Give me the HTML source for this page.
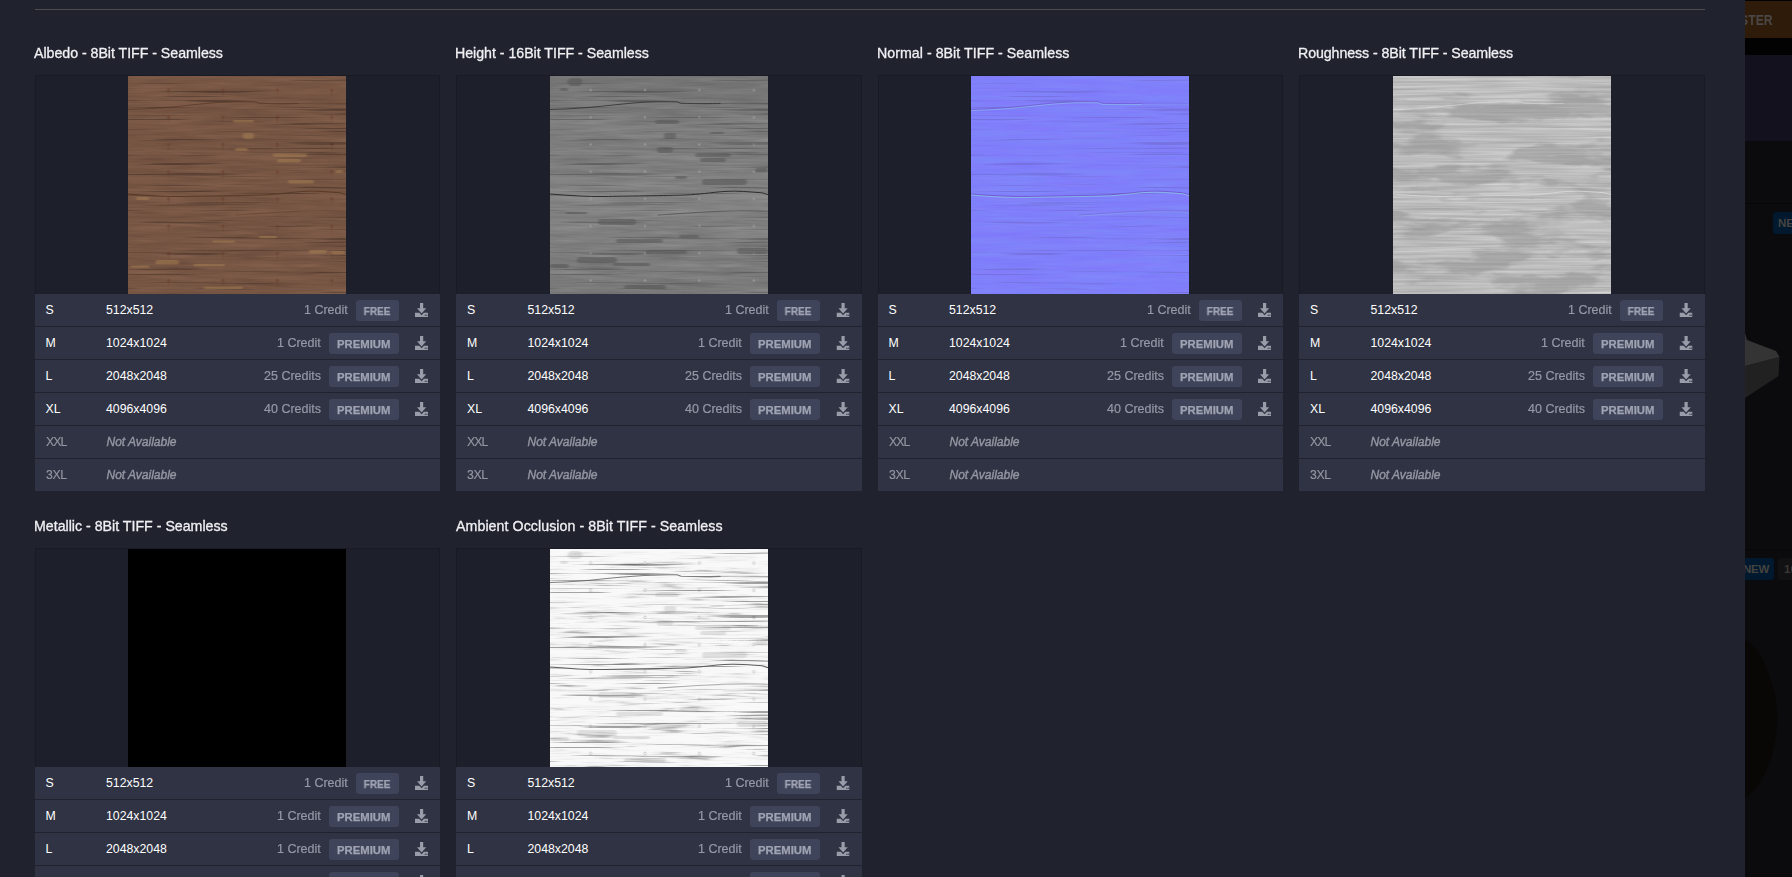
<!DOCTYPE html>
<html><head><meta charset="utf-8"><title>Textures</title>
<style>
*{box-sizing:border-box;margin:0;padding:0}
html,body{width:1792px;height:877px;overflow:hidden;background:#0b0b0d;font-family:"Liberation Sans",sans-serif;}
#bg{position:absolute;left:0;top:0;width:1792px;height:877px;background:#0b0b0d;overflow:hidden}
#bg .or{position:absolute;left:1700px;top:1px;width:92px;height:37px;background:#2e1b0a}
#bg .or span{position:absolute;right:19.4px;top:11px;height:16px;line-height:16px;font-weight:bold;font-size:14px;color:#4a4846;transform:scaleX(.87);transform-origin:100% 50%}
#bg .blk{position:absolute;left:1700px;top:0;width:92px;height:1px;background:#020202}
#bg .blk2{position:absolute;left:1700px;top:38px;width:92px;height:17px;background:#020202}
#bg .pur{position:absolute;left:1700px;top:55px;width:92px;height:86px;background:#12111d}
#bg .ln{position:absolute;left:1700px;width:92px;height:1px;background:#070709}
#bg .nb{position:absolute;height:22px;background:#00192f;border-radius:3px;color:#45433f;font-weight:bold;font-size:11.5px;line-height:22px}
#modal{position:absolute;left:0;top:0;width:1745px;height:877px;background:#20222e;overflow:hidden}
#hr{position:absolute;left:35px;top:9px;width:1670px;height:1px;background:#4d4d4d}
.col{position:absolute}
.title{position:absolute;left:-1px;top:43px;height:20px;line-height:20px;font-size:14.2px;font-weight:normal;color:#f0f0f3;-webkit-text-stroke:0.3px #f0f0f3;white-space:nowrap;will-change:transform}
.card{position:absolute;left:0;top:75px;width:100%}
.iw{height:219px;background:#1d202a;border:1px solid #191b24;border-bottom:0;position:relative}
.tex{position:absolute;top:0;display:block}
.row{position:relative;display:flex;align-items:center;height:32px;margin-bottom:1px;background:#303343;color:#fff;font-size:12.3px;line-height:32px;white-space:nowrap}
.sz{width:60px;padding-left:11px;flex:none}
.dim{flex:1;padding-left:11.5px}
.cr{color:#9699a7;margin-right:8px;font-size:12.5px;will-change:transform;-webkit-text-stroke:0.2px #9699a7}
.bd{height:21px;line-height:22px;border-radius:3px;background:#3f445a;color:#a0a3b2;font-size:11.3px;text-align:center;margin-right:16px;flex:none;position:relative;top:0.5px}
.bd.free{width:43px}
.bd.prem{width:70px}
.bd b{display:inline-block;will-change:transform;-webkit-text-stroke:0.25px #a0a3b2;position:relative;left:-0.5px}
.bd.free b{transform:scaleX(.89)}
.dl{flex:none;margin-right:12px;fill:#999ca9;position:relative;top:0px}
.ev .row{padding-right:.6px}
.ev .dl{transform:translateX(.5px)}
.na{color:#9496a2}
.na .sz{letter-spacing:-0.9px;will-change:transform;-webkit-text-stroke:0.15px #9496a2}
.na .dim{will-change:transform}
.na i{color:#9496a2;font-size:12px;-webkit-text-stroke:0.4px #9496a2}
</style></head><body>
<svg width="0" height="0" style="position:absolute">
<defs>
<filter id="f-alb" x="0" y="0" width="100%" height="100%" color-interpolation-filters="sRGB">
<feTurbulence type="fractalNoise" baseFrequency="0.012 0.16" numOctaves="3" seed="7" result="a"/>
<feTurbulence type="fractalNoise" baseFrequency="0.03 0.55" numOctaves="2" seed="3" result="b"/>
<feComposite in="a" in2="b" operator="arithmetic" k1="0" k2="0.6" k3="0.4" k4="0"/>
<feColorMatrix type="matrix" values="0.18 0 0 0 0.378  0.15 0 0 0 0.262  0.12 0 0 0 0.206  0 0 0 0 1"/>
</filter>
<filter id="f-hgt" x="0" y="0" width="100%" height="100%" color-interpolation-filters="sRGB">
<feTurbulence type="fractalNoise" baseFrequency="0.012 0.16" numOctaves="3" seed="7" result="a"/>
<feTurbulence type="fractalNoise" baseFrequency="0.03 0.55" numOctaves="2" seed="3" result="b"/>
<feComposite in="a" in2="b" operator="arithmetic" k1="0" k2="0.6" k3="0.4" k4="0"/>
<feColorMatrix type="matrix" values="0.2 0 0 0 0.395  0.2 0 0 0 0.395  0.2 0 0 0 0.395  0 0 0 0 1"/>
</filter>
<filter id="f-nrm" x="0" y="0" width="100%" height="100%" color-interpolation-filters="sRGB">
<feTurbulence type="fractalNoise" baseFrequency="0.012 0.16" numOctaves="3" seed="7" result="a"/>
<feTurbulence type="fractalNoise" baseFrequency="0.03 0.55" numOctaves="2" seed="3" result="b"/>
<feComposite in="a" in2="b" operator="arithmetic" k1="0" k2="0.6" k3="0.4" k4="0"/>
<feColorMatrix type="matrix" values="0.06 0 0 0 0.472  0 0.12 0 0 0.442  0 0 0 0 0.98  0 0 0 0 1"/>
</filter>
<filter id="f-rgh" x="0" y="0" width="100%" height="100%" color-interpolation-filters="sRGB">
<feTurbulence type="fractalNoise" baseFrequency="0.012 0.4" numOctaves="2" seed="11" result="a"/>
<feColorMatrix type="matrix" values="0.22 0 0 0 0.63  0.22 0 0 0 0.63  0.22 0 0 0 0.63  0 0 0 0 1"/>
</filter>
<filter id="f-blt" x="0" y="0" width="100%" height="100%" color-interpolation-filters="sRGB">
<feTurbulence type="fractalNoise" baseFrequency="0.013 0.045" numOctaves="4" seed="5"/>
<feColorMatrix type="matrix" values="0 0 0 0 0.58  0 0 0 0 0.58  0 0 0 0 0.58  -7 0 0 0 3.6"/>
</filter>
<filter id="f-ao" x="0" y="0" width="100%" height="100%" color-interpolation-filters="sRGB">
<feTurbulence type="fractalNoise" baseFrequency="0.012 0.16" numOctaves="3" seed="7" result="a"/>
<feTurbulence type="fractalNoise" baseFrequency="0.03 0.55" numOctaves="2" seed="3" result="b"/>
<feComposite in="a" in2="b" operator="arithmetic" k1="0" k2="0.5" k3="0.5" k4="0"/>
<feColorMatrix type="matrix" values="1 0 0 0 0  1 0 0 0 0  1 0 0 0 0  0 0 0 0 1"/>
<feComponentTransfer><feFuncR type="table" tableValues="0.5 0.55 0.62 0.76 0.92 0.97 0.98 0.98 0.98 0.98 0.98"/><feFuncG type="table" tableValues="0.5 0.55 0.62 0.76 0.92 0.97 0.98 0.98 0.98 0.98 0.98"/><feFuncB type="table" tableValues="0.5 0.55 0.62 0.76 0.92 0.97 0.98 0.98 0.98 0.98 0.98"/></feComponentTransfer>
</filter>
<filter id="f-ln" x="0" y="0" width="100%" height="100%" color-interpolation-filters="sRGB">
<feTurbulence type="fractalNoise" baseFrequency="0.007 0.42" numOctaves="2" seed="21"/>
<feColorMatrix type="matrix" values="0 0 0 0 0  0 0 0 0 0  0 0 0 0 0  -9 0 0 0 3.35"/>
</filter>
<filter id="f-lw" x="0" y="0" width="100%" height="100%" color-interpolation-filters="sRGB">
<feTurbulence type="fractalNoise" baseFrequency="0.007 0.42" numOctaves="2" seed="21"/>
<feColorMatrix type="matrix" values="0 0 0 0 1  0 0 0 0 1  0 0 0 0 1  -9 0 0 0 3.35"/>
</filter>
<filter id="f-lp" x="0" y="0" width="100%" height="100%" color-interpolation-filters="sRGB">
<feTurbulence type="fractalNoise" baseFrequency="0.007 0.42" numOctaves="2" seed="21"/>
<feColorMatrix type="matrix" values="0 0 0 0 0.42  0 0 0 0 0.32  0 0 0 0 0.8  -9 0 0 0 3.35"/>
</filter>
<filter id="f-lc" x="0" y="0" width="100%" height="100%" color-interpolation-filters="sRGB">
<feTurbulence type="fractalNoise" baseFrequency="0.007 0.42" numOctaves="2" seed="21"/>
<feColorMatrix type="matrix" values="0 0 0 0 0.55  0 0 0 0 0.75  0 0 0 0 0.95  -9 0 0 0 3.2"/>
</filter>
<filter id="bl2" x="-5%" y="-5%" width="110%" height="110%"><feGaussianBlur stdDeviation="0.9 0.5"/></filter>
<filter id="bl" x="-5%" y="-5%" width="110%" height="110%"><feGaussianBlur stdDeviation="1.2 0.7"/></filter>
<pattern id="riv-a" x="0" y="0" width="54.4" height="27.2" patternUnits="userSpaceOnUse"><circle cx="40.6" cy="14" r="1.7" fill="#6e4030"/><rect x="40.1" y="15" width="1" height="5" fill="#5d3a28" opacity=".5"/></pattern>
<pattern id="riv-h" x="0" y="0" width="54.4" height="27.2" patternUnits="userSpaceOnUse"><circle cx="40.6" cy="14" r="1.2" fill="#a8a8a8"/></pattern>
<pattern id="riv-o" x="0" y="0" width="54.4" height="27.2" patternUnits="userSpaceOnUse"><circle cx="40.6" cy="14" r="1.3" fill="#fff" stroke="#aaa" stroke-width=".7"/></pattern>
<linearGradient id="vg" x1="0" y1="0" x2="0" y2="1"><stop offset="0" stop-color="#000" stop-opacity=".09"/><stop offset=".25" stop-color="#000" stop-opacity="0"/><stop offset=".55" stop-color="#fff" stop-opacity=".04"/><stop offset="1" stop-color="#000" stop-opacity=".04"/></linearGradient>
<g id="cracks" fill="none" stroke-linecap="round">
<path opacity=".75" d="M0 33.5 C25 33 45 31 70 28.3 S110 25.5 127 25.8 L131 27.3 C150 27.8 160 27.6 170 27.4"/><path opacity=".3" d="M170 27.4 C190 27 200 27.2 218 27.5"/>
<path opacity=".95" d="M0 118 C18 119.5 38 120.8 55 120.5 S120 119.5 135 119 S160 116.5 174 115.5 S200 116 212 116.8 L218 118.6"/>
<path opacity=".45" d="M108 139 C125 138 150 136 173 135.2 S205 135 218 135.2"/>
</g>
<g id="flecksA" filter="url(#bl2)"><rect x="115" y="57" width="11" height="6" rx="2"/><rect x="107" y="72" width="13" height="3" rx="1.5"/><rect x="145" y="77.5" width="34" height="3.5" rx="1.75"/><rect x="149" y="83" width="24" height="3.5" rx="1.75"/><rect x="160" y="104" width="26" height="3.5" rx="1.75"/><rect x="8" y="121" width="13" height="3" rx="1.5"/><rect x="131" y="160" width="18" height="2.2" rx="1.1"/><rect x="84" y="164.5" width="23" height="2.2" rx="1.1"/><rect x="181" y="174" width="18" height="3.5" rx="1.75"/><rect x="27.5" y="184" width="23.5" height="4.5" rx="2"/><rect x="65.5" y="188" width="31.5" height="2.2" rx="1.1"/><rect x="2.6" y="189.5" width="18.4" height="2.2" rx="1.1"/><rect x="202" y="175" width="15" height="3" rx="1.5"/><rect x="207" y="94" width="8" height="3" rx="1.5"/><rect x="105" y="44" width="21" height="2.5" rx="1.25"/><rect x="76" y="210.5" width="39" height="2.5" rx="1.25"/></g>
<g id="flecks" filter="url(#bl)">
<rect x="105" y="44" width="24" height="4" rx="2"/><rect x="114" y="57" width="12" height="6" rx="2"/><rect x="107" y="71" width="16" height="6" rx="3"/>
<rect x="145" y="77" width="36" height="4" rx="2"/><rect x="150" y="82" width="26" height="4" rx="2"/><rect x="152" y="103" width="45" height="6" rx="3"/>
<rect x="205" y="92" width="13" height="4" rx="2"/><rect x="48" y="143" width="38" height="6" rx="3"/><rect x="66" y="163" width="47" height="4" rx="2"/>
<rect x="129" y="159" width="20" height="3" rx="1.5"/><rect x="95" y="174" width="42" height="4" rx="2"/><rect x="27" y="181" width="40" height="6" rx="3"/>
<rect x="187" y="172" width="31" height="6" rx="3"/><rect x="63" y="187" width="37" height="3" rx="1.5"/><rect x="74" y="209" width="42" height="4" rx="2"/>
<rect x="0" y="188" width="19" height="4" rx="2"/><rect x="18" y="2" width="14" height="8" rx="4"/><rect x="16" y="136" width="21" height="2" rx="1"/>
<rect x="125" y="100" width="12" height="3" rx="1.5"/><rect x="10" y="12" width="8" height="3" rx="1.5"/><rect x="160" y="56" width="14" height="2" rx="1"/>
</g>
<g id="t-albedo"><rect width="218" height="218" fill="#7a553d" filter="url(#f-alb)"/><rect width="218" height="218" fill="url(#riv-a)" opacity=".6"/><rect width="218" height="218" filter="url(#f-ln)" opacity=".22"/><use href="#flecksA" fill="#ad8755" opacity=".45"/><use href="#cracks" stroke="#4f3220" stroke-width="1" opacity=".8"/></g>
<g id="t-height"><rect width="218" height="218" fill="#7a7a7a" filter="url(#f-hgt)"/><rect width="218" height="218" fill="url(#vg)"/><rect width="218" height="218" fill="url(#riv-h)" opacity=".6"/><rect width="218" height="218" filter="url(#f-ln)" opacity=".18"/><use href="#flecks" fill="#565656" opacity=".55"/><use href="#cracks" stroke="#2a2a2a" stroke-width="1"/></g>
<g id="t-normal"><rect width="218" height="218" fill="#8080fa" filter="url(#f-nrm)"/><rect y="1" width="218" height="218" filter="url(#f-lc)" opacity=".35"/><rect width="218" height="218" filter="url(#f-lp)" opacity=".5"/><use href="#cracks" stroke="#7050c8" stroke-width="1" opacity=".9"/><use href="#cracks" stroke="#90e0e0" stroke-width=".8" opacity=".8" transform="translate(0,0.9)"/></g>
<g id="t-rough"><rect width="218" height="218" fill="#b8b8b8" filter="url(#f-rgh)"/><rect width="218" height="218" filter="url(#f-blt)" opacity=".55"/><rect width="218" height="218" filter="url(#f-lw)" opacity=".12"/><use href="#cracks" stroke="#e6e6e6" stroke-width=".8" opacity=".8"/></g>
<g id="t-metal"><rect width="218" height="218" fill="#000"/></g>
<g id="t-ao"><rect width="218" height="218" fill="#eee" filter="url(#f-ao)"/><rect width="218" height="218" fill="url(#riv-o)" opacity=".8"/><rect width="218" height="218" filter="url(#f-ln)" opacity=".34"/><use href="#flecks" fill="#999" opacity=".25"/><use href="#cracks" stroke="#555" stroke-width="1.1"/></g>
</defs></svg>
<div id="bg">
<div class="blk"></div><div class="or"><span>REGISTER</span></div><div class="blk2"></div><div class="pur"></div>
<div class="ln" style="top:203px"></div><div class="ln" style="top:549px"></div>
<div class="nb" style="left:1773px;top:212px;width:40px;padding-left:5px">NEW</div>
<div class="nb" style="left:1730px;top:558px;width:44px;padding-left:13px;letter-spacing:-0.2px">NEW</div>
<div class="nb" style="left:1778px;top:558px;width:40px;padding-left:6px;background:#111113;color:#3a3836">16K</div>
<svg style="position:absolute;left:1745px;top:320px" width="47" height="100" viewBox="0 0 47 100"><path d="M0 46 L34.5 37 L33.5 56 L0 78z" fill="#212121"/><path d="M0 13 L2 20 L31 31 L34.5 37 L0 46z" fill="#343434"/></svg>
<svg style="position:absolute;left:1745px;top:636px" width="47" height="170" viewBox="0 0 47 170"><path d="M0 4 C10 8 18 20 26 45 S34 90 28 115 S10 155 0 162z" fill="#080706"/></svg>
</div>
<div id="modal">
<div id="hr"></div>
<div class="col" style="left:34.5px;width:405.5px;top:0px"><div class="title" style="left:-0.6px;letter-spacing:-0.030px">Albedo - 8Bit TIFF - Seamless</div><div class="card"><div class="iw"><svg class="tex" style="left:92.5px" width="218" height="218" viewBox="0 0 218 218"><use href="#t-albedo"/></svg></div><div class="row"><span class="sz">S</span><span class="dim">512x512</span><span class="cr">1 Credit</span><span class="bd free"><b>FREE</b></span><svg class="dl" viewBox="0 0 13 14" width="13" height="14"><path d="M5 0h3.2v5.2h3L6.6 10.6 2 5.2h3z"/><path d="M0 9.7h4.3l2.3 2.5 2.3-2.5H13V14H0z M9.7 11.7h1.2v1h-1.2z M11.3 11.7h1.2v1h-1.2z" fill-rule="evenodd"/></svg></div><div class="row"><span class="sz">M</span><span class="dim">1024x1024</span><span class="cr">1 Credit</span><span class="bd prem"><b>PREMIUM</b></span><svg class="dl" viewBox="0 0 13 14" width="13" height="14"><path d="M5 0h3.2v5.2h3L6.6 10.6 2 5.2h3z"/><path d="M0 9.7h4.3l2.3 2.5 2.3-2.5H13V14H0z M9.7 11.7h1.2v1h-1.2z M11.3 11.7h1.2v1h-1.2z" fill-rule="evenodd"/></svg></div><div class="row"><span class="sz">L</span><span class="dim">2048x2048</span><span class="cr">25 Credits</span><span class="bd prem"><b>PREMIUM</b></span><svg class="dl" viewBox="0 0 13 14" width="13" height="14"><path d="M5 0h3.2v5.2h3L6.6 10.6 2 5.2h3z"/><path d="M0 9.7h4.3l2.3 2.5 2.3-2.5H13V14H0z M9.7 11.7h1.2v1h-1.2z M11.3 11.7h1.2v1h-1.2z" fill-rule="evenodd"/></svg></div><div class="row"><span class="sz">XL</span><span class="dim">4096x4096</span><span class="cr">40 Credits</span><span class="bd prem"><b>PREMIUM</b></span><svg class="dl" viewBox="0 0 13 14" width="13" height="14"><path d="M5 0h3.2v5.2h3L6.6 10.6 2 5.2h3z"/><path d="M0 9.7h4.3l2.3 2.5 2.3-2.5H13V14H0z M9.7 11.7h1.2v1h-1.2z M11.3 11.7h1.2v1h-1.2z" fill-rule="evenodd"/></svg></div><div class="row na"><span class="sz">XXL</span><span class="dim"><i>Not Available</i></span></div><div class="row na"><span class="sz" style="letter-spacing:-0.45px">3XL</span><span class="dim"><i>Not Available</i></span></div></div></div>
<div class="col ev" style="left:456px;width:405.5px;top:0px"><div class="title" style="left:-0.6px;letter-spacing:-0.020px">Height - 16Bit TIFF - Seamless</div><div class="card"><div class="iw"><svg class="tex" style="left:93px" width="218" height="218" viewBox="0 0 218 218"><use href="#t-height"/></svg></div><div class="row"><span class="sz">S</span><span class="dim">512x512</span><span class="cr">1 Credit</span><span class="bd free"><b>FREE</b></span><svg class="dl" viewBox="0 0 13 14" width="13" height="14"><path d="M5 0h3.2v5.2h3L6.6 10.6 2 5.2h3z"/><path d="M0 9.7h4.3l2.3 2.5 2.3-2.5H13V14H0z M9.7 11.7h1.2v1h-1.2z M11.3 11.7h1.2v1h-1.2z" fill-rule="evenodd"/></svg></div><div class="row"><span class="sz">M</span><span class="dim">1024x1024</span><span class="cr">1 Credit</span><span class="bd prem"><b>PREMIUM</b></span><svg class="dl" viewBox="0 0 13 14" width="13" height="14"><path d="M5 0h3.2v5.2h3L6.6 10.6 2 5.2h3z"/><path d="M0 9.7h4.3l2.3 2.5 2.3-2.5H13V14H0z M9.7 11.7h1.2v1h-1.2z M11.3 11.7h1.2v1h-1.2z" fill-rule="evenodd"/></svg></div><div class="row"><span class="sz">L</span><span class="dim">2048x2048</span><span class="cr">25 Credits</span><span class="bd prem"><b>PREMIUM</b></span><svg class="dl" viewBox="0 0 13 14" width="13" height="14"><path d="M5 0h3.2v5.2h3L6.6 10.6 2 5.2h3z"/><path d="M0 9.7h4.3l2.3 2.5 2.3-2.5H13V14H0z M9.7 11.7h1.2v1h-1.2z M11.3 11.7h1.2v1h-1.2z" fill-rule="evenodd"/></svg></div><div class="row"><span class="sz">XL</span><span class="dim">4096x4096</span><span class="cr">40 Credits</span><span class="bd prem"><b>PREMIUM</b></span><svg class="dl" viewBox="0 0 13 14" width="13" height="14"><path d="M5 0h3.2v5.2h3L6.6 10.6 2 5.2h3z"/><path d="M0 9.7h4.3l2.3 2.5 2.3-2.5H13V14H0z M9.7 11.7h1.2v1h-1.2z M11.3 11.7h1.2v1h-1.2z" fill-rule="evenodd"/></svg></div><div class="row na"><span class="sz">XXL</span><span class="dim"><i>Not Available</i></span></div><div class="row na"><span class="sz" style="letter-spacing:-0.45px">3XL</span><span class="dim"><i>Not Available</i></span></div></div></div>
<div class="col" style="left:877.5px;width:405.5px;top:0px"><div class="title" style="left:-0.6px;letter-spacing:0.040px">Normal - 8Bit TIFF - Seamless</div><div class="card"><div class="iw"><svg class="tex" style="left:92.5px" width="218" height="218" viewBox="0 0 218 218"><use href="#t-normal"/></svg></div><div class="row"><span class="sz">S</span><span class="dim">512x512</span><span class="cr">1 Credit</span><span class="bd free"><b>FREE</b></span><svg class="dl" viewBox="0 0 13 14" width="13" height="14"><path d="M5 0h3.2v5.2h3L6.6 10.6 2 5.2h3z"/><path d="M0 9.7h4.3l2.3 2.5 2.3-2.5H13V14H0z M9.7 11.7h1.2v1h-1.2z M11.3 11.7h1.2v1h-1.2z" fill-rule="evenodd"/></svg></div><div class="row"><span class="sz">M</span><span class="dim">1024x1024</span><span class="cr">1 Credit</span><span class="bd prem"><b>PREMIUM</b></span><svg class="dl" viewBox="0 0 13 14" width="13" height="14"><path d="M5 0h3.2v5.2h3L6.6 10.6 2 5.2h3z"/><path d="M0 9.7h4.3l2.3 2.5 2.3-2.5H13V14H0z M9.7 11.7h1.2v1h-1.2z M11.3 11.7h1.2v1h-1.2z" fill-rule="evenodd"/></svg></div><div class="row"><span class="sz">L</span><span class="dim">2048x2048</span><span class="cr">25 Credits</span><span class="bd prem"><b>PREMIUM</b></span><svg class="dl" viewBox="0 0 13 14" width="13" height="14"><path d="M5 0h3.2v5.2h3L6.6 10.6 2 5.2h3z"/><path d="M0 9.7h4.3l2.3 2.5 2.3-2.5H13V14H0z M9.7 11.7h1.2v1h-1.2z M11.3 11.7h1.2v1h-1.2z" fill-rule="evenodd"/></svg></div><div class="row"><span class="sz">XL</span><span class="dim">4096x4096</span><span class="cr">40 Credits</span><span class="bd prem"><b>PREMIUM</b></span><svg class="dl" viewBox="0 0 13 14" width="13" height="14"><path d="M5 0h3.2v5.2h3L6.6 10.6 2 5.2h3z"/><path d="M0 9.7h4.3l2.3 2.5 2.3-2.5H13V14H0z M9.7 11.7h1.2v1h-1.2z M11.3 11.7h1.2v1h-1.2z" fill-rule="evenodd"/></svg></div><div class="row na"><span class="sz">XXL</span><span class="dim"><i>Not Available</i></span></div><div class="row na"><span class="sz" style="letter-spacing:-0.45px">3XL</span><span class="dim"><i>Not Available</i></span></div></div></div>
<div class="col ev" style="left:1299px;width:405.5px;top:0px"><div class="title" style="left:-0.6px;letter-spacing:-0.075px">Roughness - 8Bit TIFF - Seamless</div><div class="card"><div class="iw"><svg class="tex" style="left:93px" width="218" height="218" viewBox="0 0 218 218"><use href="#t-rough"/></svg></div><div class="row"><span class="sz">S</span><span class="dim">512x512</span><span class="cr">1 Credit</span><span class="bd free"><b>FREE</b></span><svg class="dl" viewBox="0 0 13 14" width="13" height="14"><path d="M5 0h3.2v5.2h3L6.6 10.6 2 5.2h3z"/><path d="M0 9.7h4.3l2.3 2.5 2.3-2.5H13V14H0z M9.7 11.7h1.2v1h-1.2z M11.3 11.7h1.2v1h-1.2z" fill-rule="evenodd"/></svg></div><div class="row"><span class="sz">M</span><span class="dim">1024x1024</span><span class="cr">1 Credit</span><span class="bd prem"><b>PREMIUM</b></span><svg class="dl" viewBox="0 0 13 14" width="13" height="14"><path d="M5 0h3.2v5.2h3L6.6 10.6 2 5.2h3z"/><path d="M0 9.7h4.3l2.3 2.5 2.3-2.5H13V14H0z M9.7 11.7h1.2v1h-1.2z M11.3 11.7h1.2v1h-1.2z" fill-rule="evenodd"/></svg></div><div class="row"><span class="sz">L</span><span class="dim">2048x2048</span><span class="cr">25 Credits</span><span class="bd prem"><b>PREMIUM</b></span><svg class="dl" viewBox="0 0 13 14" width="13" height="14"><path d="M5 0h3.2v5.2h3L6.6 10.6 2 5.2h3z"/><path d="M0 9.7h4.3l2.3 2.5 2.3-2.5H13V14H0z M9.7 11.7h1.2v1h-1.2z M11.3 11.7h1.2v1h-1.2z" fill-rule="evenodd"/></svg></div><div class="row"><span class="sz">XL</span><span class="dim">4096x4096</span><span class="cr">40 Credits</span><span class="bd prem"><b>PREMIUM</b></span><svg class="dl" viewBox="0 0 13 14" width="13" height="14"><path d="M5 0h3.2v5.2h3L6.6 10.6 2 5.2h3z"/><path d="M0 9.7h4.3l2.3 2.5 2.3-2.5H13V14H0z M9.7 11.7h1.2v1h-1.2z M11.3 11.7h1.2v1h-1.2z" fill-rule="evenodd"/></svg></div><div class="row na"><span class="sz">XXL</span><span class="dim"><i>Not Available</i></span></div><div class="row na"><span class="sz" style="letter-spacing:-0.45px">3XL</span><span class="dim"><i>Not Available</i></span></div></div></div>
<div class="col" style="left:34.5px;width:405.5px;top:473px"><div class="title" style="left:-0.6px;letter-spacing:0.000px">Metallic - 8Bit TIFF - Seamless</div><div class="card"><div class="iw"><svg class="tex" style="left:92.5px" width="218" height="218" viewBox="0 0 218 218"><use href="#t-metal"/></svg></div><div class="row"><span class="sz">S</span><span class="dim">512x512</span><span class="cr">1 Credit</span><span class="bd free"><b>FREE</b></span><svg class="dl" viewBox="0 0 13 14" width="13" height="14"><path d="M5 0h3.2v5.2h3L6.6 10.6 2 5.2h3z"/><path d="M0 9.7h4.3l2.3 2.5 2.3-2.5H13V14H0z M9.7 11.7h1.2v1h-1.2z M11.3 11.7h1.2v1h-1.2z" fill-rule="evenodd"/></svg></div><div class="row"><span class="sz">M</span><span class="dim">1024x1024</span><span class="cr">1 Credit</span><span class="bd prem"><b>PREMIUM</b></span><svg class="dl" viewBox="0 0 13 14" width="13" height="14"><path d="M5 0h3.2v5.2h3L6.6 10.6 2 5.2h3z"/><path d="M0 9.7h4.3l2.3 2.5 2.3-2.5H13V14H0z M9.7 11.7h1.2v1h-1.2z M11.3 11.7h1.2v1h-1.2z" fill-rule="evenodd"/></svg></div><div class="row"><span class="sz">L</span><span class="dim">2048x2048</span><span class="cr">1 Credit</span><span class="bd prem"><b>PREMIUM</b></span><svg class="dl" viewBox="0 0 13 14" width="13" height="14"><path d="M5 0h3.2v5.2h3L6.6 10.6 2 5.2h3z"/><path d="M0 9.7h4.3l2.3 2.5 2.3-2.5H13V14H0z M9.7 11.7h1.2v1h-1.2z M11.3 11.7h1.2v1h-1.2z" fill-rule="evenodd"/></svg></div><div class="row"><span class="sz">XL</span><span class="dim">4096x4096</span><span class="cr">1 Credit</span><span class="bd prem"><b>PREMIUM</b></span><svg class="dl" viewBox="0 0 13 14" width="13" height="14"><path d="M5 0h3.2v5.2h3L6.6 10.6 2 5.2h3z"/><path d="M0 9.7h4.3l2.3 2.5 2.3-2.5H13V14H0z M9.7 11.7h1.2v1h-1.2z M11.3 11.7h1.2v1h-1.2z" fill-rule="evenodd"/></svg></div><div class="row na"><span class="sz">XXL</span><span class="dim"><i>Not Available</i></span></div><div class="row na"><span class="sz" style="letter-spacing:-0.45px">3XL</span><span class="dim"><i>Not Available</i></span></div></div></div>
<div class="col ev" style="left:456px;width:405.5px;top:473px"><div class="title" style="left:-0.1px;letter-spacing:0.070px">Ambient Occlusion - 8Bit TIFF - Seamless</div><div class="card"><div class="iw"><svg class="tex" style="left:93px" width="218" height="218" viewBox="0 0 218 218"><use href="#t-ao"/></svg></div><div class="row"><span class="sz">S</span><span class="dim">512x512</span><span class="cr">1 Credit</span><span class="bd free"><b>FREE</b></span><svg class="dl" viewBox="0 0 13 14" width="13" height="14"><path d="M5 0h3.2v5.2h3L6.6 10.6 2 5.2h3z"/><path d="M0 9.7h4.3l2.3 2.5 2.3-2.5H13V14H0z M9.7 11.7h1.2v1h-1.2z M11.3 11.7h1.2v1h-1.2z" fill-rule="evenodd"/></svg></div><div class="row"><span class="sz">M</span><span class="dim">1024x1024</span><span class="cr">1 Credit</span><span class="bd prem"><b>PREMIUM</b></span><svg class="dl" viewBox="0 0 13 14" width="13" height="14"><path d="M5 0h3.2v5.2h3L6.6 10.6 2 5.2h3z"/><path d="M0 9.7h4.3l2.3 2.5 2.3-2.5H13V14H0z M9.7 11.7h1.2v1h-1.2z M11.3 11.7h1.2v1h-1.2z" fill-rule="evenodd"/></svg></div><div class="row"><span class="sz">L</span><span class="dim">2048x2048</span><span class="cr">1 Credit</span><span class="bd prem"><b>PREMIUM</b></span><svg class="dl" viewBox="0 0 13 14" width="13" height="14"><path d="M5 0h3.2v5.2h3L6.6 10.6 2 5.2h3z"/><path d="M0 9.7h4.3l2.3 2.5 2.3-2.5H13V14H0z M9.7 11.7h1.2v1h-1.2z M11.3 11.7h1.2v1h-1.2z" fill-rule="evenodd"/></svg></div><div class="row"><span class="sz">XL</span><span class="dim">4096x4096</span><span class="cr">1 Credit</span><span class="bd prem"><b>PREMIUM</b></span><svg class="dl" viewBox="0 0 13 14" width="13" height="14"><path d="M5 0h3.2v5.2h3L6.6 10.6 2 5.2h3z"/><path d="M0 9.7h4.3l2.3 2.5 2.3-2.5H13V14H0z M9.7 11.7h1.2v1h-1.2z M11.3 11.7h1.2v1h-1.2z" fill-rule="evenodd"/></svg></div><div class="row na"><span class="sz">XXL</span><span class="dim"><i>Not Available</i></span></div><div class="row na"><span class="sz" style="letter-spacing:-0.45px">3XL</span><span class="dim"><i>Not Available</i></span></div></div></div>
</div>
</body></html>
